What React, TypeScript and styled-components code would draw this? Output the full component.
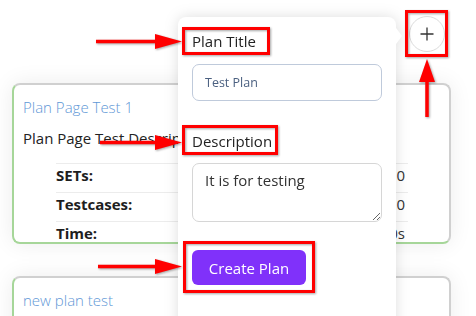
import React from "react";
import styled, { createGlobalStyle } from "styled-components";

const GlobalStyle = createGlobalStyle`
  html, body {
    margin: 0;
    padding: 0;
    background: #ffffff;
    font-family: "Open Sans", "Liberation Sans", sans-serif;
    color: #222;
  }
  * { box-sizing: border-box; }
`;

const Page = styled.div`
  position: relative;
  width: 476px;
  height: 316px;
  overflow: hidden;
  background: #fff;
`;

const Header = styled.div`
  display: flex;
  justify-content: flex-end;
  padding: 16px 31px 0 0;
`;

const PlusButton = styled.button`
  width: 36px;
  height: 36px;
  border-radius: 50%;
  border: 1px solid #dcdcdc;
  background: #fff;
  display: flex;
  align-items: center;
  justify-content: center;
  padding: 0;
  color: #333;
`;

const CardList = styled.div`
  display: flex;
  flex-direction: column;
  gap: 32px;
  margin: 31px 25px 0 12px;
`;

const Card = styled.div<{ $height: number }>`
  height: ${(p) => p.$height}px;
  flex-shrink: 0;
  overflow: hidden;
  border: 2px solid;
  border-color: #d0d0d0 #d0d0d0 #a6d699 #a6d699;
  border-radius: 8px;
  background: #fff;
  box-shadow: 0 0 22px rgba(0, 0, 0, 0.08);
  padding: 11px 9px 0 9px;
`;

const CardTitle = styled.div`
  font-size: 15px;
  font-weight: 300;
  line-height: 22px;
  color: #5f98d6;
`;

const CardDesc = styled.div`
  width: 155px;
  overflow: hidden;
  font-size: 15px;
  line-height: 22px;
  color: #222;
  margin-top: 9px;
  white-space: nowrap;
`;

const Stats = styled.div`
  margin: 14px 32px 0 33px;
`;

const StatRow = styled.div`
  display: flex;
  justify-content: space-between;
  height: 29px;
  border-top: 1px solid #ececec;
  font-size: 15px;
  line-height: 22px;
`;

const StatLabel = styled.span`
  font-weight: 700;
  color: #1e1e1e;
`;

const StatValue = styled.span`
  color: #333;
  padding-right: 3px;
`;

const Popover = styled.div`
  position: absolute;
  left: 178px;
  top: 17px;
  width: 218px;
  height: 320px;
  background: #fff;
  border-radius: 8px;
  filter: drop-shadow(0 0 7px rgba(0, 0, 0, 0.13));
  padding: 13px 14px 0 14px;
  display: flex;
  flex-direction: column;
  align-items: flex-start;

  &::after {
    content: "";
    position: absolute;
    left: 100%;
    top: 11px;
    border-left: 6px solid #fff;
    border-top: 8.5px solid transparent;
    border-bottom: 8.5px solid transparent;
  }
`;

const FieldLabel = styled.label<{ $gap: number }>`
  font-size: 15px;
  line-height: 22px;
  color: #222;
  margin-top: ${(p) => p.$gap}px;
`;

const TextInput = styled.input`
  width: 190px;
  height: 37px;
  margin-top: 12px;
  border: 1px solid #bfcadb;
  border-radius: 7px;
  padding: 0 12px;
  font-family: "Open Sans", "Liberation Sans", sans-serif;
  font-size: 12.5px;
  color: #4b6080;
  outline: none;
  background: #fff;
`;

const TextArea = styled.textarea`
  width: 190px;
  height: 59px;
  margin-top: 11px;
  border: 1px solid #d6d6d6;
  border-radius: 7px;
  padding: 5px 12px;
  font-family: "Open Sans", "Liberation Sans", sans-serif;
  font-size: 15px;
  line-height: 22px;
  color: #333;
  outline: none;
  resize: vertical;
  background: #fff;
`;

const PrimaryButton = styled.button`
  margin-top: 28px;
  width: 114px;
  height: 35px;
  border: none;
  border-radius: 6px;
  background: #8031fa;
  color: #fff;
  font-family: "Open Sans", "Liberation Sans", sans-serif;
  font-size: 15px;
  padding: 0;
`;

const Annotations = styled.svg`
  position: absolute;
  left: 0;
  top: 0;
  pointer-events: none;
  filter: drop-shadow(1.5px 1.5px 1px rgba(0, 0, 0, 0.35));
`;

const RED = "#ff0000";

function HArrow({ x1, x2, y }: { x1: number; x2: number; y: number }) {
  return (
    <g fill={RED}>
      <rect x={x1} y={y - 1.75} width={x2 - 26 - x1} height={3.5} />
      <polygon points={`${x2 - 27},${y - 7.5} ${x2},${y} ${x2 - 27},${y + 7.5}`} />
    </g>
  );
}

function VArrow({ x, y1, y2 }: { x: number; y1: number; y2: number }) {
  return (
    <g fill={RED}>
      <rect x={x - 1.75} y={y2 + 22} width={3.5} height={y1 - y2 - 22} />
      <polygon points={`${x - 8},${y2 + 23} ${x},${y2} ${x + 8},${y2 + 23}`} />
    </g>
  );
}

function Box({ x1, y1, x2, y2 }: { x1: number; y1: number; x2: number; y2: number }) {
  return (
    <rect
      x={x1 + 1.5}
      y={y1 + 1.5}
      width={x2 - x1 - 3}
      height={y2 - y1 - 3}
      fill="none"
      stroke={RED}
      strokeWidth={3}
    />
  );
}

export default function App() {
  return (
    <>
      <GlobalStyle />
      <Page>
        <Header>
          <PlusButton aria-label="Add plan">
            <svg width="14" height="14" viewBox="0 0 14 14">
              <path d="M7 0.5V13.5M0.5 7H13.5" stroke="#333" strokeWidth="1.3" />
            </svg>
          </PlusButton>
        </Header>
        <CardList>
          <Card $height={161}>
            <CardTitle>Plan Page Test 1</CardTitle>
            <CardDesc>Plan Page Test Description</CardDesc>
            <Stats>
              <StatRow>
                <StatLabel>SETs:</StatLabel>
                <StatValue>0</StatValue>
              </StatRow>
              <StatRow>
                <StatLabel>Testcases:</StatLabel>
                <StatValue>0</StatValue>
              </StatRow>
              <StatRow>
                <StatLabel>Time:</StatLabel>
                <StatValue>0s</StatValue>
              </StatRow>
            </Stats>
          </Card>
          <Card $height={161}>
            <CardTitle>new plan test</CardTitle>
          </Card>
        </CardList>

        <Popover>
          <FieldLabel $gap={0}>Plan Title</FieldLabel>
          <TextInput readOnly value="Test Plan" />
          <FieldLabel $gap={29}>Description</FieldLabel>
          <TextArea readOnly defaultValue="It is for testing" />
          <PrimaryButton>Create Plan</PrimaryButton>
        </Popover>

        <Annotations width="476" height="316" viewBox="0 0 476 316">
          <Box x1={182} y1={27} x2={270} y2={55} />
          <Box x1={182} y1={125} x2={278} y2={155} />
          <Box x1={183} y1={241} x2={315} y2={293} />
          <Box x1={405} y1={10} x2={448} y2={57} />
          <HArrow x1={96} x2={182} y={41.5} />
          <HArrow x1={100} x2={182} y={142.5} />
          <HArrow x1={98} x2={182} y={266.5} />
          <VArrow x={427} y1={117} y2={59} />
        </Annotations>
      </Page>
    </>
  );
}
